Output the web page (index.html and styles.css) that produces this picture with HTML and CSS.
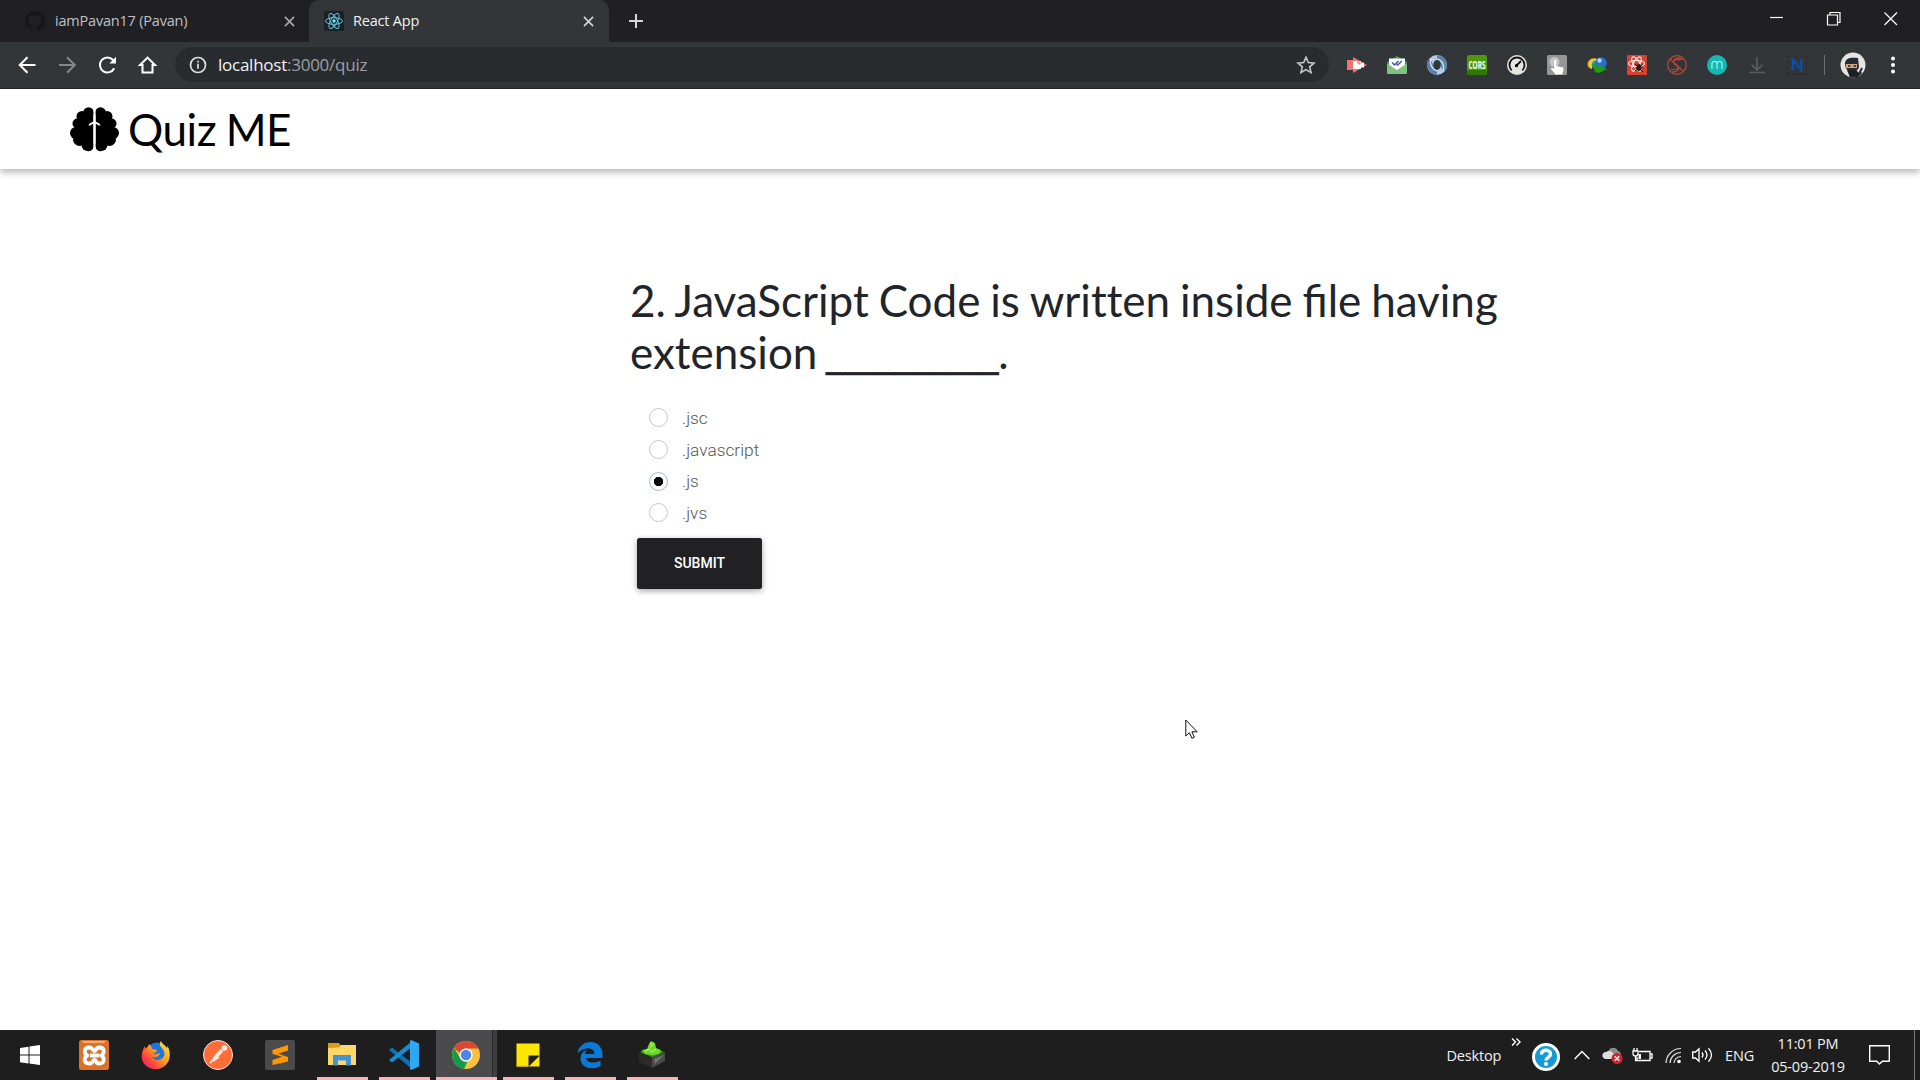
FILE: index.html
```
<!DOCTYPE html>
<html lang="en">
<head>
<meta charset="utf-8">
<title>React App</title>
<link rel="stylesheet" href="styles.css">
</head>
<body>
<header class="browser">
  <div class="tabs">
    <div class="tab">
      <svg class="favicon" viewBox="0 0 16 16"><path fill="#17171a" d="M8 0C3.58 0 0 3.58 0 8c0 3.54 2.29 6.53 5.47 7.59.4.07.55-.17.55-.38v-1.49c-2.01.37-2.53-.49-2.69-.94-.09-.23-.48-.94-.82-1.13-.28-.15-.68-.52-.01-.53.63-.01 1.08.58 1.23.82.72 1.21 1.87.87 2.33.66.07-.52.28-.87.51-1.07-1.78-.2-3.64-.89-3.64-3.95 0-.87.31-1.59.82-2.15-.08-.2-.36-1.02.08-2.12 0 0 .67-.21 2.2.82a7.4 7.4 0 0 1 4 0c1.53-1.04 2.2-.82 2.2-.82.44 1.1.16 1.92.08 2.12.51.56.82 1.27.82 2.15 0 3.07-1.87 3.75-3.65 3.95.29.25.54.73.54 1.48v2.2c0 .21.15.46.55.38A8 8 0 0 0 16 8c0-4.42-3.58-8-8-8z"/></svg>
      <span class="tab-title">iamPavan17 (Pavan)</span>
      <svg class="tab-close" viewBox="0 0 12 12"><path d="M1 1l10 10M11 1L1 11"/></svg>
    </div>
    <div class="tab tab-active">
      <svg class="favicon" viewBox="0 0 20 20"><rect width="20" height="20" rx="1.5" fill="#1d2124"/><g fill="none" stroke="#5fc4df" stroke-width="1"><ellipse cx="10" cy="10" rx="8.500" ry="3.300"/><ellipse cx="10" cy="10" rx="8.500" ry="3.300" transform="rotate(60 10 10)"/><ellipse cx="10" cy="10" rx="8.500" ry="3.300" transform="rotate(120 10 10)"/></g><circle cx="10" cy="10" r="1.700" fill="#7fe0f8"/></svg>
      <span class="tab-title">React App</span>
      <svg class="tab-close" viewBox="0 0 12 12"><path d="M1 1l10 10M11 1L1 11"/></svg>
    </div>
    <svg class="new-tab" viewBox="0 0 16 16"><path d="M8 1v14M1 8h14"/></svg>
    <div class="window-controls">
      <svg viewBox="0 0 14 14"><path d="M0 5.500h13"/></svg>
      <svg viewBox="0 0 14 14"><path d="M.5 3h10v10H.5zM3 3V.5h10v10h-2.500"/></svg>
      <svg viewBox="0 0 14 14"><path d="M.5.5l12.500 12.500M13 .5L.5 13"/></svg>
    </div>
  </div>
  <div class="toolbar">
    <svg class="nav" viewBox="0 0 20 20"><path d="M18.500 10H3M10.500 2.200L2.700 10l7.800 7.800"/></svg>
    <svg class="nav nav-off" viewBox="0 0 20 20"><path d="M2 10h15.500M10 2.200l7.800 7.800-7.800 7.800"/></svg>
    <svg class="nav" viewBox="0 0 20 20"><path d="M17.200 13.200A7.500 7.500 0 1 1 15.800 4.700L17.500 6.500"/><path d="M19 1.800v6.700h-6.700z" fill="#fff" stroke="none"/></svg>
    <svg class="nav" viewBox="0 0 20 20"><path d="M10.500 2.600L3 10h2.500v7.500h10V10H18z"/></svg>
    <div class="omnibox">
      <svg class="info" viewBox="0 0 18 18"><circle cx="9" cy="9" r="7.500"/><path d="M9 7.800v5M9 4.700v1.900"/></svg>
      <span class="url">localhost<span class="url-rest">:3000/quiz</span></span>
      <svg class="star" viewBox="0 0 20 20"><path d="M10 2.300l2.300 5.300 5.700.5-4.300 3.800 1.300 5.700-5-3-5 3 1.300-5.700L2 8.100l5.700-.5z"/></svg>
    </div>
    <div class="extensions">
      <svg viewBox="0 0 20 20"><path fill="#ee7272" d="M0 5h6V2l14 8-14 8v-3H0z"/><path fill="#fff" d="M6 6h8v2l3-.5v5L14 12v2H6z"/><path fill="#f58d8d" d="M11 5l3 3-1 2-3-2z"/></svg>
      <svg viewBox="0 0 20 20"><path fill="#3e9b50" d="M0 7l10-6 10 6v10.500a1.500 1.500 0 0 1-1.500 1.500h-17A1.500 1.500 0 0 1 0 17.500z"/><path fill="#fff" d="M2 3.500h16V11l-8 5-8-5z"/><path fill="#7fc284" d="M0 8.500l10 6.500 10-6.500v9a1.500 1.500 0 0 1-1.500 1.500h-17A1.500 1.500 0 0 1 0 17.500z"/><path fill="none" stroke="#4954bd" stroke-width="1.500" d="M5 7.500l2.500 2.500 4-4M9.500 8.700l1.300 1.300 4-4"/></svg>
      <svg viewBox="0 0 20 20"><circle cx="10" cy="10" r="10" fill="#b5cbe5"/><path fill="#5c81ac" d="M10 0a10 10 0 0 1 8.600 15C14 18 15 9 10 5zM10 20A10 10 0 0 1 1 5.500C6 3 5 12 10 15z"/><path fill="none" stroke="#dfebf7" stroke-width="1.200" d="M4 4c-2 5 1 10 6 12M16 16c2-6-1-11-6-12"/><ellipse cx="10" cy="10" rx="3.700" ry="5" fill="#30363b"/></svg>
      <svg viewBox="0 0 20 20"><rect width="20" height="20" rx="2" fill="#4c9a0b"/><rect y="15" width="20" height="5" rx="2" fill="#2f7900"/><text class="cors" x="10" y="13.500" textLength="17" lengthAdjust="spacingAndGlyphs">CORS</text></svg>
      <svg viewBox="0 0 20 20"><circle cx="10" cy="10" r="10" fill="#e4e4e0"/><path fill="none" stroke="#151515" stroke-width="1.800" d="M4.700 15.300a7.500 7.500 0 1 1 10.600 0M9.500 10.500L14 6"/><circle cx="9.500" cy="10.700" r="1.600"/></svg>
      <svg viewBox="0 0 20 20"><rect width="20" height="20" rx="1.500" fill="#969696"/><circle cx="7.500" cy="7" r="5" fill="#c4c4c4"/><path fill="#fff" d="M7 5.500c0-1.500 2.300-1.500 2.300 0V11l7 1.600V16L15 19.500H8.500L4 14c0-1.500 1.500-1.700 3 0z"/></svg>
      <svg viewBox="0 0 20 20"><path fill="#c9402d" d="M0 10c0-4 3-7 7-7l-4 6-1 5z"/><path fill="#e3cf2e" d="M2 6c4-4 9-3 9 0-4-1-6 3-6 8-4-1-5-5-3-8z"/><path fill="#2f9fb8" d="M5 8c1-3 4-3 5-2l-2 7c-2 1-4-2-3-5z"/><circle cx="14" cy="8" r="5.800" fill="#286ed0"/><circle cx="12.500" cy="5.500" r="2.200" fill="#b4d6f4"/><path fill="#1f9a19" d="M5 9l3-1v3l5-1 7 4-8 4-4-1z"/></svg>
      <svg viewBox="0 0 20 20"><rect width="20" height="20" rx="1" fill="#d44232"/><g fill="none" stroke="#ffe3dd" stroke-width="1.200"><ellipse cx="9.500" cy="8.500" rx="8" ry="3.200"/><ellipse cx="9.500" cy="9" rx="8" ry="3.200" transform="rotate(60 9.500 9)"/><ellipse cx="9.500" cy="9" rx="8" ry="3.200" transform="rotate(120 9.500 9)"/></g><ellipse cx="12" cy="12.500" rx="2.500" ry="3.500" fill="#271917"/><path stroke="#271917" d="M8 9l8 8M16 9l-8 7M8 13h8"/></svg>
      <svg viewBox="0 0 20 20"><g fill="none" stroke="#b84635" stroke-width="1.300"><circle cx="10" cy="10" r="9.300"/><path d="M3 4l13 12M5 17c7 0 8-4 5-6S5 7 8 5c2-1 5 0 8-1M4 14c5 2 9-1 6-3M7 8c-1-5 4-6 7-4"/></g></svg>
      <svg viewBox="0 0 20 20"><circle cx="10" cy="10" r="10" fill="#14b8b2"/><path fill="none" stroke="#8ff1ea" stroke-width="1.300" d="M5 14V9c0-3.500 5-3.500 5 0v5M10 9c0-3.500 5-3.500 5 0v5"/></svg>
      <svg viewBox="0 0 20 20"><path fill="none" stroke="#5a5d60" stroke-width="1.600" d="M10 2v13M4.500 9.500L10 15l5.500-5.500M2 17.500h16"/></svg>
      <svg viewBox="0 0 20 20"><path fill="none" stroke="#25282b" stroke-dasharray="4 2" d="M.5 1h19v18H.5z"/><path fill="none" stroke="#0c4ea5" stroke-width="2.600" d="M6 15V5l8 9.500V4.500"/></svg>
    </div>
    <div class="divider"></div>
    <svg class="avatar" viewBox="0 0 26 26"><circle cx="13" cy="13" r="12.500" fill="#e6e3e3"/><path fill="#262b33" d="M5 12c0-6 5-7 13-6l1 9c-1 6-12 6-13.500 0z"/><path fill="#d3a777" d="M6 12h11v4H6z"/><path d="M8 14h2.500m3 0H16" stroke="#222" stroke-width="1.500"/><path fill="#1c2026" d="M7 18h9l3 3 1-2 2 2-5 4.500H10z"/><path stroke="#272c34" stroke-width="2" d="M22 16l-3 6"/></svg>
    <svg class="menu" viewBox="0 0 6 20"><circle cx="3" cy="3.500" r="2"/><circle cx="3" cy="10" r="2"/><circle cx="3" cy="16.500" r="2"/></svg>
  </div>
</header>

<nav class="site-header">
  <svg class="brain" viewBox="0 0 49 44"><g><circle cx="18.500" cy="5.500" r="5.300"/><circle cx="12" cy="9.500" r="5.500"/><circle cx="7.500" cy="16.500" r="5"/><circle cx="6" cy="26" r="6"/><circle cx="9.500" cy="32.500" r="6.500"/><circle cx="17.500" cy="38" r="6"/><path d="M11 5h12.400v33a5 5 0 0 1-6 6L6 31V15z"/></g><g transform="matrix(-1 0 0 1 49 0)"><circle cx="18.500" cy="5.500" r="5.300"/><circle cx="12" cy="9.500" r="5.500"/><circle cx="7.500" cy="16.500" r="5"/><circle cx="6" cy="26" r="6"/><circle cx="9.500" cy="32.500" r="6.500"/><circle cx="17.500" cy="38" r="6"/><path d="M11 5h12.400v33a5 5 0 0 1-6 6L6 31V15z"/></g><path fill="none" stroke="#fff" stroke-width="2" d="M24.500 0v44M19.500 18.500c0-2 3-1.500 5-4 2 2.500 5 2 5 4"/></svg>
  <span class="brand">Quiz ME</span>
</nav>

<main class="quiz">
  <h1 class="question">2. JavaScript Code is <span class="plain">written</span> inside file having extension <span class="blank">__________</span>.</h1>
  <div class="options">
    <label class="option"><span class="radio"></span><span class="answer">.jsc</span></label>
    <label class="option"><span class="radio"></span><span class="answer">.javascript</span></label>
    <label class="option option-checked"><span class="radio"></span><span class="answer">.js</span></label>
    <label class="option"><span class="radio"></span><span class="answer">.jvs</span></label>
  </div>
  <button class="submit">SUBMIT</button>
</main>

<footer class="taskbar">
  <div class="apps">
    <div class="app app-start"><svg viewBox="0 0 30 30"><path fill="#fff" d="M5 8l8.500-1.300v7.800H5zM14.500 6.500L25 5v9.500H14.500zM5 15.500h8.500v8L5 22.300zM14.500 15.500H25V25l-10.500-1.400z"/></svg></div>
    <div class="app"><svg viewBox="0 0 30 30"><rect width="30" height="30" rx="2.500" fill="#dc7129"/><path fill="#f1ab79" d="M3 1h24l-2 2H5z"/><path fill="none" stroke="#fff" stroke-width="3.800" stroke-linejoin="round" d="M10.500 7.500C7 7.500 5.800 9 5.800 11.300S7 15 8.500 15.500C7 16 5.800 17 5.800 19.500s1.200 4 4.700 4 3-3.500 5-3.500 1 3.500 4.500 3.500 4.700-1.500 4.700-4-1.200-3.500-2.700-4c1.500-.5 2.700-1.900 2.700-4.200S23.500 7.500 20 7.500 17.500 11 15.500 11s-1.500-3.500-5-3.500zM11 15.500h9"/></svg></div>
    <div class="app"><svg viewBox="0 0 30 30"><defs><linearGradient id="fox" x1="1" y1="0" x2="0" y2="1"><stop offset="0" stop-color="#fff04a"/><stop offset=".45" stop-color="#ff9a1f"/><stop offset=".75" stop-color="#ff3b47"/><stop offset="1" stop-color="#e31587"/></linearGradient></defs><circle cx="16" cy="13" r="10.500" fill="#1678e0"/><path fill="url(#fox)" d="M20 1c1 3 4 4 6 7 1-1 0-3 0-3 3 5 4 12 1 17-6 10-20 9-25 0C-1 16 2 9 4 6v3c2-2 4-3 4-5 2 2 3 3 3 5l5 1c0 2-3 3-4 4 2 1 5 0 7-1-1 4-4 5-8 4 2 3 6 4 9 2 6-3 3-9 0-12-2-2-1-5 0-6z"/></svg></div>
    <div class="app"><svg viewBox="0 0 30 30"><circle cx="15" cy="15" r="14.500" fill="#ff6c37" stroke="#fbe6de"/><path stroke="#ffe9df" stroke-width="4" d="M19 10l-6 6.500"/><path stroke="#ffe9df" stroke-width="1.800" d="M14 16l-7 7M16 17l-6 4M14 14l-4 5"/><circle cx="21.500" cy="8" r="2.800" fill="#ffe9df"/></svg></div>
    <div class="app"><svg viewBox="0 0 30 30"><rect width="30" height="30" rx="2" fill="#4b4b4b"/><path fill="#ff9800" d="M7.500 10L23 5v5.500l-10 3.300 10 3.200v4.500L7.500 25v-5l9.500-3.200-9.500-3z"/></svg></div>
    <div class="app app-open"><svg viewBox="0 0 30 30"><path fill="#d99b18" d="M1 3h11l2 3v5H1z"/><path fill="#ffd768" d="M1 8l11-.5L14 5h15v20H1z"/><path fill="#4394d0" d="M6 15h18v10.500h-5v-5h-8v5H6z"/></svg></div>
    <div class="app app-open"><svg viewBox="0 0 30 30"><path fill="#0b71b5" d="M0 10l3-2.500L23 23v6z"/><path fill="#168bd0" d="M0 20l3 2.500L23 7V1z"/><path fill="#30a8f1" d="M22 0l8 3.500v23L22 30l-1-1V1z"/></svg></div>
    <div class="app app-open app-current"><svg viewBox="0 0 30 30"><circle cx="15" cy="15" r="14" fill="#fbc13d"/><path fill="#d94837" d="M3 8a14 14 0 0 1 24.500.5H15a6.500 6.500 0 0 0-6 4.500z"/><path fill="#149a50" d="M3 8l6.500 10.500a6.500 6.500 0 0 0 7 3L13 29A14 14 0 0 1 3 8z"/><circle cx="15" cy="15" r="6.600" fill="#fff"/><circle cx="15" cy="15" r="5.200" fill="#4c83ee"/></svg></div>
    <div class="app app-open"><svg viewBox="0 0 30 30"><path fill="#ffe500" d="M3.500 3.500h23v12L15.500 26.500h-12z"/><path fill="#e9c900" d="M3.500 25.500h12v1h-12z"/><path fill="#ffe500" d="M26.500 16v10.500H15.700z"/><path fill="#1e1e1e" d="M15.500 15.500h11l-11 11z"/></svg></div>
    <div class="app app-open"><svg viewBox="0 0 30 30"><path fill="#0a7ad9" d="M2.500 13C4 6 9 2 15.500 2 23 2 27.500 7.500 27.500 14.500V18H11c.5 5 8.500 6 14.500 2.500v5.500C16 31 5.500 27 5.500 19c0-5 3-8 6.500-9.500C10.500 11 10 12.500 10 14h9.500c0-7-10-8-17-1z"/></svg></div>
    <div class="app app-open"><svg viewBox="0 0 30 30"><path fill="#2b2b2b" d="M2 12l13 5v11L2 22z"/><path fill="#4a4a4a" d="M28 12l-13 5v11l13-7z"/><path fill="#737373" d="M17 19l10-4-9 9z"/><path fill="#37a50c" d="M3 12L15 7l12 5-12 5z"/><path fill="#70da2b" d="M5 10l5-1 2-5 2-3 4 2 1 5 5 2-2 4-6 1-8-1z"/><path fill="none" stroke="#b5ff6b" d="M8 11l4-2 3 3 4-3M13 3l3 2-3 2"/></svg></div>
  </div>
  <div class="tray">
    <span class="desktop">Desktop</span>
    <svg class="chevrons" viewBox="0 0 10 8"><path d="M1 .5l3.500 3.500L1 7.500M5.500.5L9 4 5.500 7.500"/></svg>
    <svg class="help" viewBox="0 0 30 30"><circle cx="15" cy="15" r="12.500" fill="#139bd7" stroke="#fff" stroke-width="3"/><path fill="none" stroke="#fff" stroke-width="3.400" d="M10.500 12.500c0-6 9.500-5.500 9 0-.3 2.500-4.500 3-4.500 6"/><circle cx="15" cy="22" r="2.100" fill="#fff"/></svg>
    <svg class="caret" viewBox="0 0 16 10"><path d="M.7 9L8 1.500 15.300 9"/></svg>
    <svg class="cloud" viewBox="0 0 21 18"><path fill="#8b8b8b" d="M6 6C7 1 14 0 16 5c4 1 4 7 0 8H7z"/><path fill="#dedede" d="M3.500 13C-1 12-.5 6 4 6c2-2 6-1 7 1l5 6z"/><circle cx="15" cy="12.500" r="5.500" fill="#d3222b"/><path stroke="#fff" stroke-width="1.400" d="M12.700 10.200l4.600 4.600m0-4.600l-4.600 4.600"/></svg>
    <svg class="battery" viewBox="0 0 21 15"><path fill="none" stroke="#fff" stroke-width="1.300" d="M7 3.500h11v9H5V9M18.700 6H20v4h-1.300M1 3h5v2.500a2.500 2.500 0 0 1-5 0zM2 0v3M5 0v3M3.500 8v4.500H5"/><path fill="#fff" d="M6.500 6H9v5H6.500z"/></svg>
    <svg class="wifi" viewBox="0 0 17 17"><g fill="none" stroke="#ddd" stroke-width="1.200"><path d="M1 16A15 15 0 0 1 16 1.500M5 16A11 11 0 0 1 16 5.500M9 16a7 7 0 0 1 7-6.500"/></g><circle cx="14" cy="14.500" r="1.800" fill="#fff"/></svg>
    <svg class="speaker" viewBox="0 0 22 16"><g fill="none" stroke="#fff" stroke-width="1.300"><path d="M.7 5h2.800L7 1.700v12.600L3.500 11H.7z"/><path d="M10 5.500q2 2.500 0 5M13 3.500q4 4.500 0 9M16.500 1.300q6 6.700 0 13.400"/></g></svg>
    <span class="lang">ENG</span>
    <div class="clock"><span>11:01 PM</span><span>05-09-2019</span></div>
    <svg class="notify" viewBox="0 0 21 20"><path d="M.7.700h19.600v15.500h-7L10.500 19l-2.800-2.800h-7z"/></svg>
    <div class="show-desktop"></div>
  </div>
</footer>
<svg class="cursor" viewBox="0 0 14 21"><path fill="#fff" stroke="#111" stroke-width="1" d="M.8 1v16l3.600-3.300 2.500 5.600 2.500-1.100-2.500-5.400h5.300z"/></svg>
</body>
</html>
```
FILE: styles.css
```
* { box-sizing: border-box; }
body {
  margin: 0;
  height: 1080px;
  display: flex;
  flex-direction: column;
  overflow: hidden;
  background: #fff;
  font-family: "Open Sans", "Noto Sans", sans-serif;
}
svg { display: block; flex: none; overflow: visible; }

.browser { flex: none; background: #323639; }
.tabs { height: 42px; display: flex; align-items: center; background: #202024; }
.tab {
  width: 300px;
  height: 42px;
  margin-left: 9px;
  padding: 0 14px 0 16px;
  display: flex;
  align-items: center;
  color: #bdc1c6;
}
.tab-active {
  margin-left: 0;
  padding: 0 15px;
  border-radius: 10px 10px 0 0;
  background: #323639;
  color: #f1f3f4;
}
.favicon { width: 20px; height: 20px; margin-right: 10px; }
.tab-active .favicon { margin-right: 9px; }
.tab-title { flex: none; padding-bottom: 2px; font-size: 14.500px; letter-spacing: -.2px; white-space: nowrap; }
.tab-close { width: 11px; height: 11px; margin-left: auto; fill: none; stroke: #a9adb0; stroke-width: 1.700; }
.tab-active .tab-close { stroke: #d5d8da; }
.new-tab { width: 16px; height: 16px; margin-left: 19px; fill: none; stroke: #d5d8da; stroke-width: 2; }
.window-controls { margin-left: auto; padding-right: 22px; display: flex; gap: 43px; }
.window-controls svg { width: 14px; height: 14px; margin-bottom: 4px; fill: none; stroke: #fff; stroke-width: 1.200; }

.toolbar {
  height: 47px;
  padding: 0 24px 1px 17px;
  display: flex;
  align-items: center;
  border-bottom: 1px solid #25282a;
}
.nav { width: 20px; height: 20px; margin-right: 20px; fill: none; stroke: #fff; stroke-width: 2; }
.nav-off { stroke: #84878a; }
.omnibox {
  width: 1154px;
  height: 35px;
  margin-right: 7px;
  margin-left: -2px;
  padding: 0 13px 0 14px;
  display: flex;
  align-items: center;
  border-radius: 18px;
  background: #282c2f;
}
.info { width: 18px; height: 18px; fill: none; stroke: #dfe1e3; stroke-width: 1.700; }
.url { margin-left: 11px; font-size: 17px; letter-spacing: -.25px; color: #f1f3f4; }
.url-rest { color: #9aa0a6; }
.star { width: 20px; height: 20px; margin-left: auto; fill: none; stroke: #c5c8ca; stroke-width: 1.600; }
.extensions { display: flex; padding-left: 11px; gap: 20px; }
.extensions svg { width: 20px; height: 20px; }
.cors { font: bold 10px "Open Sans", sans-serif; text-anchor: middle; fill: #fff; }
.divider { width: 1px; height: 20px; margin: 0 15px 0 17px; background: #6d7073; }
.avatar { width: 26px; height: 26px; }
.menu { width: 6px; height: 20px; margin-left: auto; fill: #fff; }

.site-header {
  flex: none;
  height: 80px;
  padding-left: 70px;
  display: flex;
  align-items: center;
  box-shadow: 0 3px 7px rgba(0, 0, 0, .3);
}
.brain { width: 49px; height: 44px; }
.brand { margin-left: 9px; font: 44px/60px Lato, sans-serif; letter-spacing: -.4px; word-spacing: -1.500px; color: #000; }

.quiz { flex: 1; width: 900px; margin-left: 630px; padding-top: 105px; }
.question { margin: 0; font: 400 44px/52px Lato, sans-serif; word-spacing: -1.400px; color: #212529; }
.plain { font-variant-ligatures: none; }
.blank { margin: 0 1px 0 -3px; letter-spacing: -2.900px; -webkit-text-stroke: .6px #212529; }
.options { padding: 24px 0 0 19px; }
.option { height: 31.700px; display: flex; align-items: center; }
.radio { width: 19px; height: 19px; border: 1px solid #c8c8c8; border-radius: 50%; }
.option-checked .radio { border-color: #96bfd0; background: radial-gradient(circle, #0b0b0b 4.400px, #fff 5px); }
.answer { margin-left: 14px; font: 300 17.300px/24px Roboto, sans-serif; color: #555; }
.submit {
  width: 125px;
  height: 51px;
  margin: 9px 0 0 7px;
  padding: 0;
  border: 0;
  border-radius: 2.500px;
  background: #212124;
  color: #fff;
  font: 500 14px Roboto, sans-serif;
  box-shadow: 0 2px 6px rgba(0, 0, 0, .35);
}

.taskbar { flex: none; height: 50px; display: flex; justify-content: space-between; background: #1e1e1f; color: #f2f2f2; }
.apps { display: flex; gap: 11px; padding-left: 5px; }
.app { width: 51px; height: 50px; padding: 10px 2px 0 0; border-bottom: 3px solid transparent; display: flex; justify-content: center; align-items: flex-start; }
.app svg { width: 30px; height: 30px; }
.app-start { margin-right: 2px; }
.app-open { border-color: #ffb1b5; }
.app-current { width: 61px; margin: 0 -5px; background: linear-gradient(90deg, #4a4a4c 56px, #29292b 56px, #29292b 57px, #3e3e40 57px); }
.tray { display: flex; align-items: center; font-size: 14.500px; letter-spacing: -.2px; }
.chevrons { width: 10px; height: 8px; margin: 0 8px 26px 10px; fill: none; stroke: #fff; stroke-width: 1.400; }
.help { width: 30px; height: 30px; margin: 3px 13px 0 2px; }
.caret { width: 16px; height: 10px; margin-right: 12px; fill: none; stroke: #fff; stroke-width: 1.500; }
.cloud { width: 21px; height: 18px; margin-right: 9px; }
.battery { width: 21px; height: 15px; margin-right: 12px; }
.wifi { width: 17px; height: 17px; margin-right: 10px; }
.speaker { width: 22px; height: 16px; margin-right: 11px; }
.clock { width: 76px; margin: 0 23px 0 16px; display: flex; flex-direction: column; align-items: center; line-height: 23px; white-space: nowrap; }
.notify { width: 21px; height: 20px; margin-right: 24px; fill: none; stroke: #fff; stroke-width: 1.400; }
.show-desktop { align-self: stretch; width: 6px; border-left: 1px solid #7a7a7a; }
.cursor { position: absolute; left: 1185px; top: 719px; width: 14px; height: 21px; }
```
